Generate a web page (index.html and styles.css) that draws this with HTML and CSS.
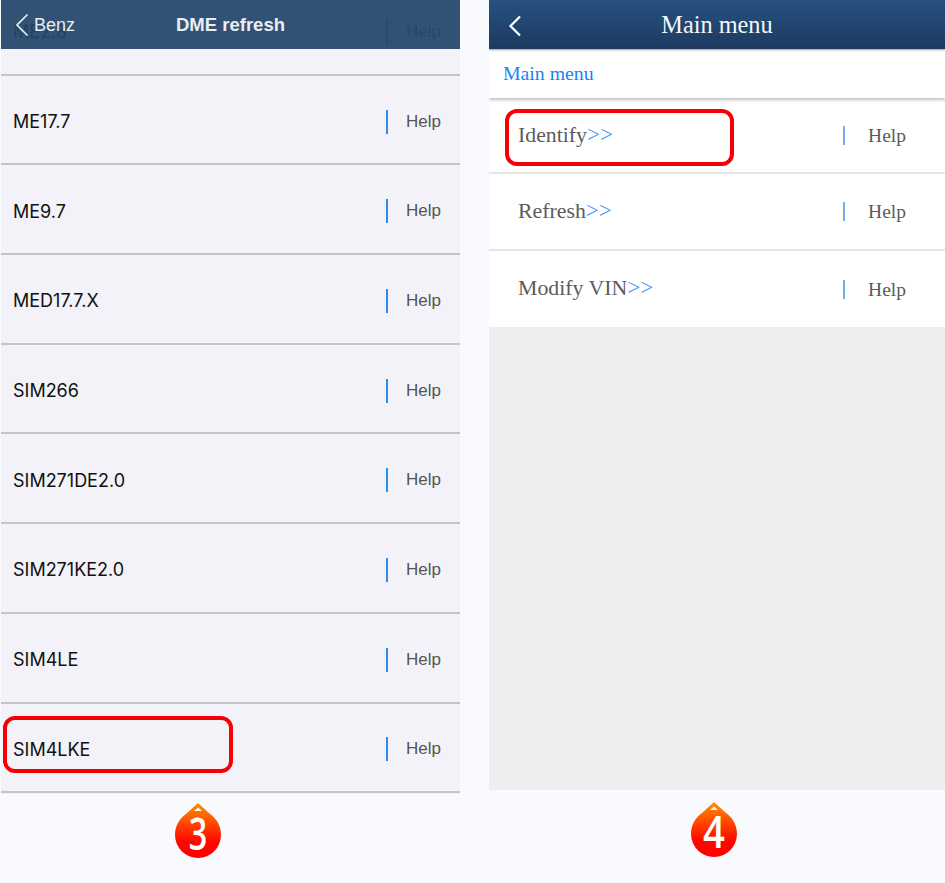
FILE: index.html
```html
<!DOCTYPE html>
<html lang="en">
<head>
    <meta charset="UTF-8">
    <meta name="viewport" content="width=device-width, initial-scale=1.0">
    <title>DME refresh steps</title>
    <link rel="stylesheet" href="styles.css">
</head>
<body>
    <div class="page">
        <div class="step step-left">
            <div class="phone list-phone">
                <div class="list-bar">
                    <svg class="back-icon" width="14" height="24" viewBox="0 0 14 24"><path d="M12.5 1.5 L2 12 L12.5 22.5" fill="none" stroke="#e9eef3" stroke-width="1.7"/></svg>
                    <span class="back-label">Benz</span>
                    <span class="list-title">DME refresh</span>
                </div>
                <div class="list">
                    <div class="list-row"><span class="list-name">ME2.8</span><span class="list-help">Help</span></div>
                    <div class="list-row"><span class="list-name">ME17.7</span><span class="list-help">Help</span></div>
                    <div class="list-row"><span class="list-name">ME9.7</span><span class="list-help">Help</span></div>
                    <div class="list-row"><span class="list-name">MED17.7.X</span><span class="list-help">Help</span></div>
                    <div class="list-row"><span class="list-name">SIM266</span><span class="list-help">Help</span></div>
                    <div class="list-row"><span class="list-name">SIM271DE2.0</span><span class="list-help">Help</span></div>
                    <div class="list-row"><span class="list-name">SIM271KE2.0</span><span class="list-help">Help</span></div>
                    <div class="list-row"><span class="list-name">SIM4LE</span><span class="list-help">Help</span></div>
                    <div class="list-row"><span class="list-name">SIM4LKE</span><span class="list-help">Help</span><div class="mark mark-list"></div></div>
                </div>
            </div>
            <div class="badge-area">
                <svg class="badge" width="46" height="56" viewBox="0 0 46 56">
                    <defs><linearGradient id="drop3" x1="0" y1="0" x2="0" y2="1"><stop offset="0" stop-color="#ff9000"/><stop offset="0.7" stop-color="#ff0800"/><stop offset="1" stop-color="#fb0000"/></linearGradient></defs>
                    <path d="M23 0 L35 11 C41.500 15.500 46 23 46 32 A23 23 0 0 1 0 32 C0 23 4.500 15.500 11 11 Z" fill="url(#drop3)"/>
                    <path d="M23 4.500 L27 8 L19 8 Z" fill="#fff"/>
                    <text class="badge-num" transform="translate(23 47) scale(0.72 1)" text-anchor="middle">3</text>
                </svg>
            </div>
        </div>

        <div class="step step-right">
            <div class="phone menu-phone">
                <div class="menu-bar">
                    <svg class="menu-back" width="14" height="22" viewBox="0 0 14 22"><path d="M12 1.500 L2.500 11 L12 20.500" fill="none" stroke="#fff" stroke-width="2.200"/></svg>
                    <span class="menu-title">Main menu</span>
                </div>
                <div class="crumb">Main menu</div>
                <div class="menu-row"><span class="menu-name">Identify<b>&gt;&gt;</b></span><span class="menu-help">Help</span><div class="mark mark-menu"></div></div>
                <div class="menu-row"><span class="menu-name">Refresh<b>&gt;&gt;</b></span><span class="menu-help">Help</span></div>
                <div class="menu-row menu-row-last"><span class="menu-name">Modify VIN<b>&gt;&gt;</b></span><span class="menu-help">Help</span></div>
                <div class="menu-empty"></div>
            </div>
            <div class="badge-area">
                <svg class="badge" width="46" height="56" viewBox="0 0 46 56">
                    <defs><linearGradient id="drop4" x1="0" y1="0" x2="0" y2="1"><stop offset="0" stop-color="#ff9000"/><stop offset="0.7" stop-color="#ff0800"/><stop offset="1" stop-color="#fb0000"/></linearGradient></defs>
                    <path d="M23 0 L35 11 C41.500 15.500 46 23 46 32 A23 23 0 0 1 0 32 C0 23 4.500 15.500 11 11 Z" fill="url(#drop4)"/>
                    <path d="M23 4.500 L27 8 L19 8 Z" fill="#fff"/>
                    <text class="badge-num" transform="translate(23 46) scale(0.85 1)" text-anchor="middle">4</text>
                </svg>
            </div>
        </div>
    </div>
</body>
</html>
```

FILE: styles.css
```css
html, body {
    margin: 0;
    padding: 0;
}
body {
    background: #f9fafd;
    font-family: "Liberation Sans", Arial, sans-serif;
    overflow: hidden;
}
.page {
    display: flex;
    width: 945px;
    height: 883px;
    padding-left: 1px;
    box-sizing: border-box;
    gap: 29px;
}
.step {
    display: flex;
    flex-direction: column;
}
.step-left {
    width: 459px;
}
.step-right {
    width: 456px;
}
.phone {
    position: relative;
    overflow: hidden;
}
.list-phone {
    height: 794px;
    background: #f2f2f8;
}
.list-bar {
    position: absolute;
    top: 0;
    left: 0;
    right: 0;
    height: 49px;
    background: rgba(36, 70, 106, 0.93);
    display: flex;
    align-items: center;
    color: #e9eef3;
    z-index: 2;
}
.back-icon {
    margin-left: 14px;
}
.back-label {
    margin-left: 5px;
    font-size: 18px;
    padding-top: 1px;
}
.list-title {
    position: absolute;
    left: 0;
    right: 0;
    text-align: center;
    font-size: 18.500px;
    font-weight: bold;
    pointer-events: none;
}
.list {
    margin-top: -14px;
}
.list-row {
    position: relative;
    display: flex;
    align-items: center;
    justify-content: space-between;
    height: 89.700px;
    box-sizing: border-box;
    padding: 4px 19px 0 12px;
    border-bottom: 2px solid #c4c4c6;
}
.list-name {
    font-family: Inter, "Liberation Sans", sans-serif;
    font-size: 18px;
    color: #111;
}
.list-help {
    font-size: 17px;
    color: #555;
    border-left: 2px solid #2b8cf0;
    padding: 2px 0 2px 18px;
    line-height: 20px;
}
.mark {
    position: absolute;
    box-sizing: border-box;
    border: 4px solid #f60006;
    border-radius: 12px;
}
.mark-list {
    left: 2px;
    top: 12px;
    width: 230px;
    height: 57px;
}
.menu-phone {
    height: 790px;
    background: #fff;
    display: flex;
    flex-direction: column;
}
.menu-bar {
    flex: none;
    height: 49px;
    background: linear-gradient(#265181, #1d3a60);
    display: flex;
    align-items: center;
    justify-content: center;
    position: relative;
    box-shadow: 0 1px 2px rgba(0, 0, 0, 0.4);
}
.menu-back {
    position: absolute;
    left: 19px;
    top: 15px;
}
.menu-title {
    font-family: "Liberation Serif", "Times New Roman", serif;
    font-size: 24.300px;
    color: #f4f6f8;
}
.crumb {
    flex: none;
    height: 49px;
    line-height: 49px;
    padding-left: 14px;
    font-family: "Liberation Serif", "Times New Roman", serif;
    font-size: 19.800px;
    color: #1784f5;
    box-shadow: 0 2px 3px rgba(0, 0, 0, 0.25);
    position: relative;
}
.menu-row {
    flex: none;
    position: relative;
    height: 76.340px;
    box-sizing: border-box;
    display: flex;
    align-items: center;
    justify-content: space-between;
    padding: 1px 39px 0 29px;
    border-bottom: 2px solid #e6e6e6;
    font-family: "Liberation Serif", "Times New Roman", serif;
}
.menu-row-last {
    border-bottom: 0;
}
.menu-name {
    font-size: 21.800px;
    color: #5b5b5b;
    margin-bottom: 2px;
}
.menu-name b {
    font-weight: normal;
    font-size: 23px;
    color: #3d97fb;
}
.menu-help {
    font-size: 19.500px;
    color: #5b5b5b;
    border-left: 2px solid #74aef0;
    padding-left: 23px;
    line-height: 19px;
}
.mark-menu {
    left: 16px;
    top: 11px;
    width: 229px;
    height: 57px;
}
.menu-empty {
    flex: 1;
    background: #eeeeee;
}
.badge-area {
    flex: 1;
    display: flex;
    padding-top: 9px;
}
.step-left .badge-area {
    padding-left: 174px;
}
.step-right .badge-area {
    padding-left: 202px;
    padding-top: 12px;
}
.badge {
    display: block;
    overflow: visible;
}
.badge-num {
    font-family: "Open Sans", sans-serif;
    font-weight: 600;
    font-size: 45px;
    fill: #fff;
}
```
